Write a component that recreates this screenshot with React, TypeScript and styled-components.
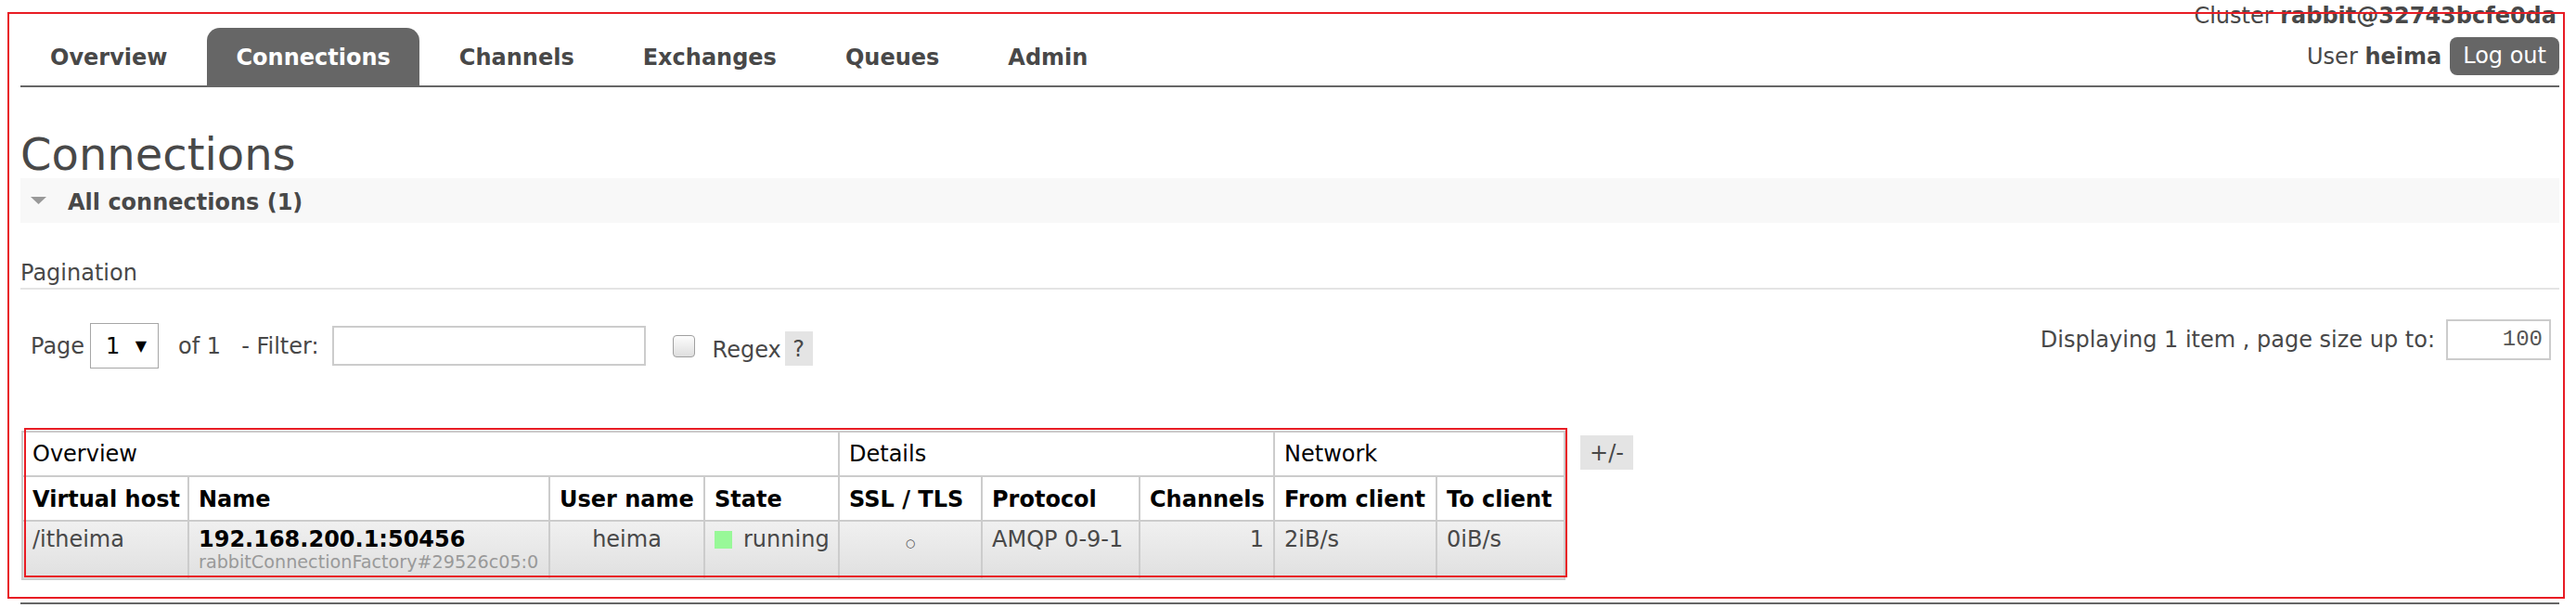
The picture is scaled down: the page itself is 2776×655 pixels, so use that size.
import React from 'react';
import styled, { createGlobalStyle } from 'styled-components';

const GlobalStyle = createGlobalStyle`
  html, body { margin: 0; padding: 0; background: #fff; }
  body {
    font-family: "DejaVu Sans", Verdana, sans-serif;
    font-size: 24px;
    color: #484848;
  }
  * { box-sizing: border-box; }
`;

const Page = styled.div`
  position: relative;
  width: 2776px;
  height: 655px;
  overflow: hidden;
  padding: 3px 18px 0 22px;
`;

const Annotation = styled.div`
  position: absolute;
  border: 2px solid #e81c24;
  pointer-events: none;
  z-index: 5;
`;

const Header = styled.header`
  display: flex;
  justify-content: space-between;
  align-items: flex-end;
  border-bottom: 2px solid #666;
`;

const Tabs = styled.ul`
  display: flex;
  list-style: none;
  margin: 0 0 0 1px;
  padding: 0;
  gap: 12px;
`;

const Tab = styled.li<{ $active?: boolean }>`
  padding: 18px 31px 16px;
  line-height: 28px;
  font-weight: bold;
  white-space: nowrap;
  color: ${(p) => (p.$active ? '#fff' : '#484848')};
  background: ${(p) => (p.$active ? '#666' : 'transparent')};
  border-radius: 14px 14px 0 0;
`;

const UserInfo = styled.div`
  display: flex;
  flex-direction: column;
  align-items: flex-end;
  padding-bottom: 11px;
`;

const InfoLine = styled.div`
  line-height: 28px;
  white-space: nowrap;
  margin-right: 3px;
`;

const UserRow = styled.div`
  display: flex;
  align-items: center;
  gap: 9px;
  margin-top: 9px;
  line-height: 28px;
  white-space: nowrap;
`;

const LogoutButton = styled.span`
  background: #666;
  color: #fff;
  border-radius: 8px;
  padding: 6px 14px 7px;
  line-height: 28px;
`;

const Main = styled.main`
  padding-top: 46px;
`;

const Title = styled.h1`
  margin: 0;
  font-size: 48px;
  font-weight: normal;
  line-height: 52px;
  color: #484848;
`;

const SectionBar = styled.h2`
  margin: 0;
  height: 48px;
  background: #f8f8f8;
  display: flex;
  align-items: center;
  padding: 4px 0 0 11px;
  font-size: 24px;
  font-weight: bold;
  line-height: 28px;
  color: #484848;
`;

const Arrow = styled.svg`
  width: 17px;
  height: 8px;
  margin-right: 23px;
  margin-bottom: 4px;
`;

const SubTitle = styled.div`
  margin-top: 40px;
  line-height: 28px;
  padding-bottom: 2px;
  border-bottom: 2px solid #e4e4e4;
`;

const PagerRow = styled.div`
  display: flex;
  justify-content: space-between;
  align-items: flex-start;
  margin-top: 32px;
  padding: 0 9px 0 11px;
`;

const PagerGroup = styled.div<{ $offset?: number }>`
  display: flex;
  align-items: center;
  margin-top: ${(p) => p.$offset ?? 0}px;
  line-height: 28px;
  white-space: nowrap;
`;

const Label = styled.span<{ $ml?: number; $mt?: number }>`
  margin-left: ${(p) => p.$ml ?? 0}px;
  margin-top: ${(p) => p.$mt ?? 0}px;
`;

const SelectBox = styled.div`
  margin-left: 6px;
  width: 74px;
  height: 49px;
  border: 1px solid #a6a6a6;
  background: #fff;
  display: flex;
  align-items: center;
  justify-content: space-between;
  padding: 0 12px 0 16px;
  color: #000;
`;

const SelectArrow = styled.span`
  font-size: 16px;
  color: #000;
`;

const TextInput = styled.div<{ $w: number; $h: number; $ml: number }>`
  width: ${(p) => p.$w}px;
  height: ${(p) => p.$h}px;
  margin-left: ${(p) => p.$ml}px;
  border: 2px solid #ccc;
  background: #fff;
  display: flex;
  align-items: center;
  justify-content: flex-end;
  padding-right: 7px;
  font-family: "Liberation Mono", "DejaVu Sans Mono", monospace;
  font-size: 24px;
  color: #555;
`;

const Checkbox = styled.span`
  margin-left: 29px;
  width: 24px;
  height: 24px;
  border: 1px solid #a0a0a0;
  border-radius: 4px;
  background: linear-gradient(#fdfdfd, #dedede);
`;

const HelpBox = styled.span`
  margin-left: 4px;
  margin-top: 6px;
  width: 30px;
  height: 37px;
  background: #e4e4e4;
  display: flex;
  align-items: center;
  justify-content: center;
`;

const TableArea = styled.div`
  display: flex;
  align-items: flex-start;
  margin-top: 67px;
  padding-left: 1px;
`;

const TableWrap = styled.div`
  position: relative;
`;

const Table = styled.table`
  border-collapse: collapse;
  table-layout: fixed;
  width: 1662px;
  border: 2px solid #ccc;
  line-height: 28px;
`;

const GroupTh = styled.th`
  border: 2px solid #ccc;
  padding: 9px 10px;
  text-align: left;
  font-weight: normal;
  color: #000;
  background: #fff;
  white-space: nowrap;
`;

const ColTh = styled.th`
  border: 2px solid #ccc;
  padding: 10px 10px 8px;
  text-align: left;
  font-weight: bold;
  color: #000;
  background: #fff;
  white-space: nowrap;
`;

const Td = styled.td<{ $align?: 'left' | 'center' | 'right' }>`
  border: 2px solid #ccc;
  padding: 5px 10px 6px;
  vertical-align: top;
  text-align: ${(p) => p.$align ?? 'left'};
  background: linear-gradient(#f0f0f0, #e0e0e0);
  color: #484848;
  white-space: nowrap;
`;

const Strong = styled.b`
  color: #000;
  font-weight: bold;
`;

const Small = styled.span`
  display: block;
  font-size: 19.2px;
  line-height: 22px;
  color: #999;
`;

const StatusDot = styled.span`
  display: inline-block;
  width: 19px;
  height: 19px;
  background: #98f898;
  margin-right: 12px;
  vertical-align: -2px;
`;

const TinyCircle = styled.span`
  font-size: 12px;
`;

const ToggleBox = styled.span`
  margin-left: 16px;
  margin-top: 5px;
  width: 57px;
  height: 37px;
  background: #e4e4e4;
  display: flex;
  align-items: center;
  justify-content: center;
`;

const Footer = styled.div`
  margin-top: 24px;
  border-top: 2px solid #666;
`;

const tabs = ['Overview', 'Connections', 'Channels', 'Exchanges', 'Queues', 'Admin'];
const colWidths = [179, 389, 167, 145, 154, 170, 145, 175, 138];

export default function App() {
  return (
    <>
      <GlobalStyle />
      <Page>
        <Header>
          <Tabs>
            {tabs.map((t) => (
              <Tab key={t} $active={t === 'Connections'}>
                {t}
              </Tab>
            ))}
          </Tabs>
          <UserInfo>
            <InfoLine>
              Cluster <b>rabbit@32743bcfe0da</b>
            </InfoLine>
            <UserRow>
              <span>
                User <b>heima</b>
              </span>
              <LogoutButton>Log out</LogoutButton>
            </UserRow>
          </UserInfo>
        </Header>

        <Main>
          <Title>Connections</Title>
          <SectionBar>
            <Arrow viewBox="0 0 17 8">
              <polygon points="0,0 17,0 8.5,8" fill="#999" />
            </Arrow>
            All connections (1)
          </SectionBar>

          <SubTitle>Pagination</SubTitle>
          <PagerRow>
            <PagerGroup $offset={4}>
              <Label>Page</Label>
              <SelectBox>
                <span>1</span>
                <SelectArrow>▼</SelectArrow>
              </SelectBox>
              <Label $ml={21}>of 1</Label>
              <Label $ml={22}>- Filter:</Label>
              <TextInput $w={338} $h={43} $ml={14} />
              <Checkbox />
              <Label $ml={19} $mt={9}>Regex</Label>
              <HelpBox>?</HelpBox>
            </PagerGroup>
            <PagerGroup>
              <Label>Displaying 1 item , page size up to:</Label>
              <TextInput $w={113} $h={44} $ml={12}>100</TextInput>
            </PagerGroup>
          </PagerRow>

          <TableArea>
            <TableWrap>
              <Table>
                <colgroup>
                  {colWidths.map((w, i) => (
                    <col key={i} style={{ width: w }} />
                  ))}
                </colgroup>
                <thead>
                  <tr>
                    <GroupTh colSpan={4}>Overview</GroupTh>
                    <GroupTh colSpan={3}>Details</GroupTh>
                    <GroupTh colSpan={2}>Network</GroupTh>
                  </tr>
                  <tr>
                    <ColTh>Virtual host</ColTh>
                    <ColTh>Name</ColTh>
                    <ColTh>User name</ColTh>
                    <ColTh>State</ColTh>
                    <ColTh>SSL / TLS</ColTh>
                    <ColTh>Protocol</ColTh>
                    <ColTh>Channels</ColTh>
                    <ColTh>From client</ColTh>
                    <ColTh>To client</ColTh>
                  </tr>
                </thead>
                <tbody>
                  <tr>
                    <Td>/itheima</Td>
                    <Td>
                      <Strong>192.168.200.1:50456</Strong>
                      <Small>rabbitConnectionFactory#29526c05:0</Small>
                    </Td>
                    <Td $align="center">heima</Td>
                    <Td>
                      <StatusDot />
                      running
                    </Td>
                    <Td $align="center">
                      <TinyCircle>○</TinyCircle>
                    </Td>
                    <Td>AMQP 0-9-1</Td>
                    <Td $align="right">1</Td>
                    <Td>2iB/s</Td>
                    <Td>0iB/s</Td>
                  </tr>
                </tbody>
              </Table>
              <Annotation style={{ left: 3, top: -3, width: 1663, height: 161 }} />
            </TableWrap>
            <ToggleBox>+/-</ToggleBox>
          </TableArea>
          <Footer />
        </Main>
        <Annotation style={{ left: 8, top: 13, width: 2756, height: 632 }} />
      </Page>
    </>
  );
}
